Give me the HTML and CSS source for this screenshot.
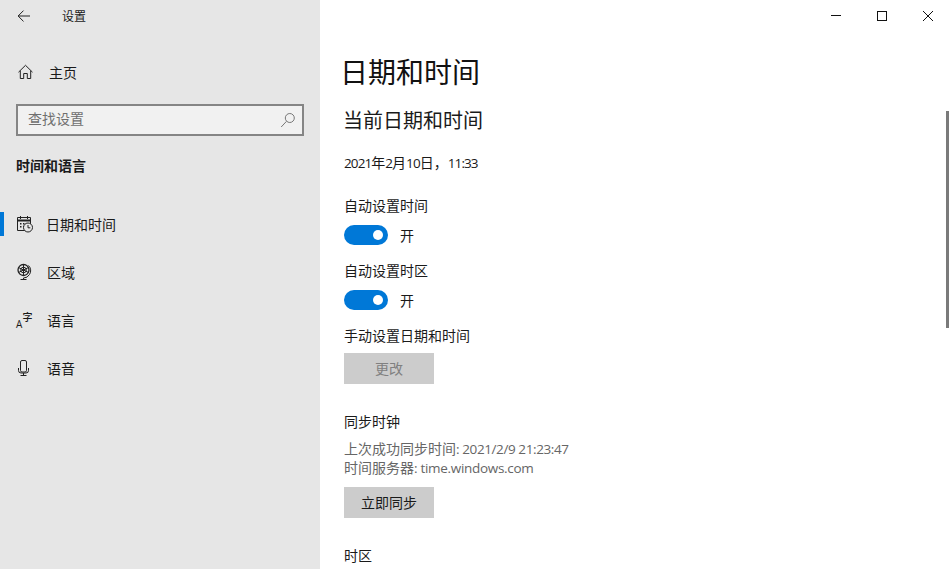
FILE: index.html
```html
<!DOCTYPE html>
<html lang="zh-CN">
<head>
<meta charset="utf-8">
<title>设置</title>
<link rel="stylesheet" href="styles.css">
</head>
<body>
<div class="window">
  <aside class="sidebar">
    <div class="titlebar">
      <svg class="back" width="16" height="16" viewBox="0 0 16 16"><path d="M14 8H2.200M7.500 2.600 2.100 8l5.400 5.400" fill="none" stroke="#222" stroke-width="1"/></svg>
      <span class="apptitle">设置</span>
    </div>
    <div class="home">
      <svg class="ico" width="16" height="16" viewBox="0 0 16 16"><path d="M.5 8.200 7.500 1.300l7 6.900M2.300 6.800V14.500h3.400V9.500h3.600v5h3.400V6.800" fill="none" stroke="#222" stroke-width="1"/></svg>
      <span>主页</span>
    </div>
    <div class="search">
      <span class="search-text">查找设置</span>
      <svg width="16" height="16" viewBox="0 0 16 16"><circle cx="9.800" cy="6" r="4.500" fill="none" stroke="#777" stroke-width="1"/><path d="M6.500 9.300 1.200 15" fill="none" stroke="#777" stroke-width="1"/></svg>
    </div>
    <div class="group">时间和语言</div>
    <nav class="nav">
      <div class="item active">
        <svg class="ico" width="16" height="18" viewBox="0 0 16 18"><g fill="none" stroke="#222" stroke-width="1"><path d="M.5 2.500h13v13H.5z"/><path d="M3.500 1v3M10.500 1v3"/><path d="M.5 5.500h13" stroke-width="2"/></g><path d="M3 8h1.500v1.500H3zM6 8h1.500v1.500H6zM9 8h1.500v1.500H9zM3 11h1.500v1.500H3zM6 11h1.500v1.500H6z" fill="#222"/><circle cx="11" cy="12.500" r="4.500" fill="#e6e6e6" stroke="#222" stroke-width="1"/><path d="M11 10v2.800h2.300" fill="none" stroke="#222" stroke-width="1"/></svg>
        <span>日期和时间</span>
      </div>
      <div class="item">
        <svg class="ico" width="16" height="18" viewBox="0 0 16 18"><g fill="none" stroke="#222" stroke-width="1"><circle cx="6.500" cy="7" r="5.500" stroke-width="1.300"/><circle cx="6.500" cy="7" r="2.800"/><path d="M1.500 4.500l10 5M1.500 9.500l10-5M6.500 1.500v11"/><path d="M11.500 2.500a7 7 0 0 1 1 9 7 7 0 0 1-6 3.500M6.500 15v1.500M3.500 16.500h6"/></g></svg>
        <span>区域</span>
      </div>
      <div class="item">
        <span class="lang-ico"><span class="la">A</span><span class="lz">字</span></span>
        <span>语言</span>
      </div>
      <div class="item">
        <svg class="ico" width="16" height="18" viewBox="0 0 16 18"><g fill="none" stroke="#222" stroke-width="1"><rect x="3.500" y="1.500" width="6" height="11.500" rx="1.500"/><path d="M1.500 9v2.500a2.500 2.500 0 0 0 2.500 2.500h5a2.500 2.500 0 0 0 2.500-2.500V9M6.500 14v2.500M3.500 16.500h6"/></g></svg>
        <span>语音</span>
      </div>
    </nav>
  </aside>
  <main class="main">
    <div class="controls">
      <svg width="10" height="10" viewBox="0 0 10 10"><path d="M0 4.500h10" stroke="#111" stroke-width="1"/></svg>
      <svg width="10" height="10" viewBox="0 0 10 10"><rect x=".5" y=".5" width="9" height="9" fill="none" stroke="#111" stroke-width="1"/></svg>
      <svg width="10" height="10" viewBox="0 0 10 10"><path d="M0 0 10 10M10 0 0 10" stroke="#111" stroke-width="1"/></svg>
    </div>
    <div class="scrollthumb"></div>
    <div class="content">
      <h1 class="title">日期和时间</h1>
      <h2 class="subtitle">当前日期和时间</h2>
      <p class="datetime"><span class="dg">2021</span>年<span class="dg">2</span>月<span class="dg">10</span>日，<span class="dg">11:33</span></p>
      <div class="label first">自动设置时间</div>
      <div class="toggle-row"><span class="toggle"><span class="knob"></span></span><span>开</span></div>
      <div class="label second">自动设置时区</div>
      <div class="toggle-row"><span class="toggle"><span class="knob"></span></span><span>开</span></div>
      <div class="label third">手动设置日期和时间</div>
      <div class="btn disabled">更改</div>
      <div class="label sync">同步时钟</div>
      <div class="info">上次成功同步时间<span class="lt tight">: 2021/2/9 21:23:47</span></div>
      <div class="info">时间服务器<span class="lt">: time.windows.com</span></div>
      <div class="btn syncbtn">立即同步</div>
      <div class="label zone">时区</div>
    </div>
  </main>
</div>
</body>
</html>
```
FILE: styles.css
```css
* { box-sizing: border-box; }
html, body { margin: 0; height: 100%; overflow: hidden; }
body {
  font-family: "Noto Sans CJK SC", "Open Sans", sans-serif;
  font-size: 14px;
  line-height: 20px;
  color: #1a1a1a;
  background: #fff;
}
.lt, .dg { font-family: "Open Sans", "Noto Sans CJK SC", sans-serif; font-size: 13.5px; }
.lt { letter-spacing: -0.3px; }
.dg { letter-spacing: -0.9px; }
.lt.tight { letter-spacing: -0.4px; }
.window { display: flex; width: 951px; height: 569px; overflow: hidden; }
.sidebar { width: 320px; flex: none; background: #e6e6e6; }
.titlebar { display: flex; align-items: center; height: 32px; padding-left: 16px; }
.apptitle { margin-left: 30px; font-size: 12px; line-height: 32px; }
.ico { flex: none; }
.home { display: flex; align-items: center; height: 24px; margin-top: 28px; padding-left: 18px; gap: 15px; }
.search {
  display: flex; align-items: center; justify-content: space-between;
  width: 288px; height: 32px; margin: 20px 0 0 16px; padding: 0 6px 0 10px;
  background: #f1f1f1; border: 2px solid #858585; color: #6f6f6f;
}
.search-text { margin-bottom: 4px; }
.group { margin: 17px 0 0 16px; font-weight: 700; line-height: 24px; }
.nav { margin-top: 23px; }
.item { position: relative; display: flex; align-items: center; height: 48px; padding-left: 17px; gap: 14px; }
.item.active { gap: 13px; }
.item.active::before { content: ""; position: absolute; left: 0; top: 12px; width: 4px; height: 24px; background: #0078d7; }
.lang-ico { position: relative; display: block; width: 16px; height: 18px; flex: none; }
.la { position: absolute; left: -1px; bottom: 1px; font-family: "Open Sans", sans-serif; font-size: 10px; line-height: 7px; }
.lz { position: absolute; left: 5.600px; top: 2px; font-size: 10px; line-height: 8px; font-weight: 500; }
.main { position: relative; flex: 1; min-width: 0; }
.controls { position: absolute; top: 11px; right: 18px; display: flex; gap: 36px; }
.scrollthumb { position: absolute; right: 2px; top: 111px; width: 3px; height: 217px; background: #7a7a7a; }
.content { padding: 49px 0 0 24px; }
.title { margin: 0 0 0 -4px; font-size: 28px; font-weight: 400; line-height: 44px; color: #111; }
.subtitle { margin: 11px 0 0 -1px; font-size: 20px; font-weight: 400; line-height: 32px; }
.datetime { margin: 16px 0 0; height: 20px; line-height: 20px; }
.label { line-height: 20px; }
.first { margin-top: 23px; }
.second { margin-top: 13px; }
.third { margin-top: 13px; }
.toggle-row { display: flex; align-items: center; gap: 12px; height: 24px; margin-top: 8px; }
.toggle { display: flex; justify-content: flex-end; align-items: center; width: 44px; height: 20px; padding-right: 5px; border-radius: 10px; background: #0078d7; }
.knob { width: 10px; height: 10px; border-radius: 50%; background: #fff; }
.btn { width: 90px; height: 31px; margin-top: 8px; line-height: 31px; text-align: center; background: #cccccc; }
.disabled { color: #808080; }
.sync { margin-top: 27px; }
.info { color: #666; height: 19px; line-height: 19px; }
.sync + .info { margin-top: 8px; }
.syncbtn { margin-top: 10px; }
.zone { margin-top: 27px; }
```
